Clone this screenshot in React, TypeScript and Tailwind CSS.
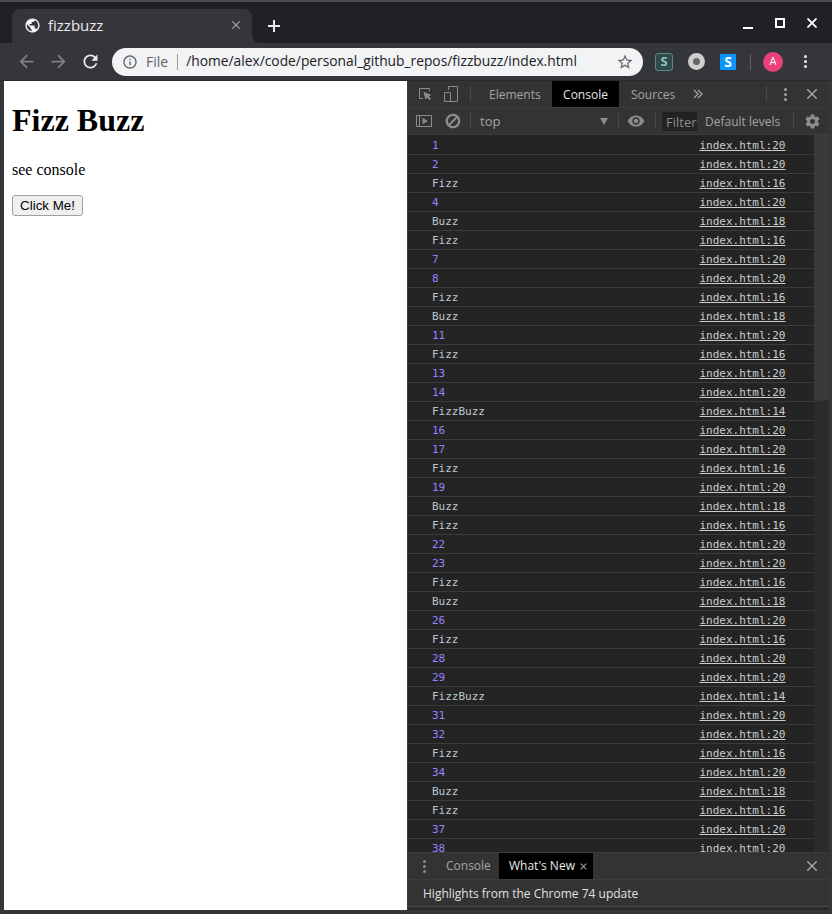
import type { ReactNode } from "react";

const paths = {
  globe:
    "M12 2C6.48 2 2 6.48 2 12s4.48 10 10 10 10-4.48 10-10S17.52 2 12 2zm-1 17.93c-3.95-.49-7-3.85-7-7.93 0-.62.08-1.21.21-1.79L9 15v1c0 1.1.9 2 2 2v1.93zm6.9-2.54c-.26-.81-1-1.39-1.9-1.39h-1v-3c0-.55-.45-1-1-1H8v-2h2c.55 0 1-.45 1-1V7h2c1.1 0 2-.9 2-2v-.41c2.93 1.19 5 4.06 5 7.41 0 2.08-.8 3.97-2.1 5.39z",
  close:
    "M19 6.41L17.59 5 12 10.59 6.41 5 5 6.41 10.59 12 5 17.59 6.41 19 12 13.41 17.59 19 19 17.59 13.41 12z",
  back: "M20 11H7.83l5.59-5.59L12 4l-8 8 8 8 1.41-1.41L7.83 13H20v-2z",
  forward: "M12 4l-1.41 1.41L16.17 11H4v2h12.17l-5.58 5.59L12 20l8-8z",
  reload:
    "M17.65 6.35C16.2 4.9 14.21 4 12 4c-4.42 0-7.99 3.58-7.99 8s3.57 8 7.99 8c3.73 0 6.84-2.55 7.73-6h-2.08c-.82 2.33-3.04 4-5.65 4-3.31 0-6-2.69-6-6s2.69-6 6-6c1.66 0 3.14.69 4.22 1.78L13 11h7V4l-2.35 2.35z",
  info: "M11 7h2v2h-2zm0 4h2v6h-2zm1-9C6.48 2 2 6.48 2 12s4.48 10 10 10 10-4.48 10-10S17.52 2 12 2zm0 18c-4.41 0-8-3.59-8-8s3.59-8 8-8 8 3.59 8 8-3.59 8-8 8z",
  star: "M22 9.24l-7.19-.62L12 2 9.19 8.63 2 9.24l5.46 4.73L5.82 21 12 17.27 18.18 21l-1.63-7.03L22 9.24zM12 15.4l-3.76 2.27 1-4.28-3.32-2.88 4.38-.38L12 6.1l1.71 4.04 4.38.38-3.32 2.88 1 4.28L12 15.4z",
  block:
    "M12 1C5.93 1 1 5.93 1 12s4.93 11 11 11 11-4.93 11-11S18.07 1 12 1zM4.5 12c0-4.14 3.36-7.5 7.5-7.5 1.55 0 3 .47 4.2 1.28L5.78 16.2C4.97 15 4.5 13.55 4.5 12zm7.5 7.5c-1.55 0-3-.47-4.2-1.28L18.22 7.8c.81 1.2 1.28 2.65 1.28 4.2 0 4.14-3.36 7.5-7.5 7.5z",
  eye: "M12 4.5C7 4.5 2.73 7.61 1 12c1.73 4.39 6 7.5 11 7.5s9.27-3.11 11-7.5c-1.73-4.39-6-7.5-11-7.5zM12 17c-2.76 0-5-2.24-5-5s2.24-5 5-5 5 2.24 5 5-2.24 5-5 5zm0-8c-1.66 0-3 1.34-3 3s1.34 3 3 3 3-1.34 3-3-1.34-3-3-3z",
  gear: "M19.43 12.98c.04-.32.07-.64.07-.98s-.03-.66-.07-.98l2.11-1.65c.19-.15.24-.42.12-.64l-2-3.46c-.12-.22-.39-.3-.61-.22l-2.49 1c-.52-.4-1.08-.73-1.69-.98l-.38-2.65C14.46 2.18 14.25 2 14 2h-4c-.25 0-.46.18-.49.42l-.38 2.65c-.61.25-1.17.59-1.69.98l-2.49-1c-.23-.09-.49 0-.61.22l-2 3.46c-.13.22-.07.49.12.64l2.11 1.65c-.04.32-.07.65-.07.98s.03.66.07.98l-2.11 1.65c-.19.15-.24.42-.12.64l2 3.46c.12.22.39.3.61.22l2.49-1c.52.4 1.08.73 1.69.98l.38 2.65c.03.24.24.42.49.42h4c.25 0 .46-.18.49-.42l.38-2.65c.61-.25 1.17-.59 1.69-.98l2.49 1c.23.09.49 0 .61-.22l2-3.46c.12-.22.07-.49-.12-.64l-2.11-1.65zM12 15.5c-1.93 0-3.5-1.57-3.5-3.5s1.57-3.5 3.5-3.5 3.5 1.57 3.5 3.5-1.57 3.5-3.5 3.5z",
};

const Icon = ({ d, size, className }: { d: string; size: number; className: string }) => (
  <svg width={size} height={size} viewBox="0 0 24 24" fill="currentColor" className={`shrink-0 ${className}`}>
    <path d={d} />
  </svg>
);

const Dots = ({ className }: { className: string }) => (
  <div className={`flex flex-col gap-[2px] shrink-0 ${className}`}>
    <span className="w-[3px] h-[3px] rounded-full bg-current" />
    <span className="w-[3px] h-[3px] rounded-full bg-current" />
    <span className="w-[3px] h-[3px] rounded-full bg-current" />
  </div>
);

const Divider = ({ className = "" }: { className?: string }) => (
  <span className={`w-px h-[16px] bg-[#4a4a4a] shrink-0 ${className}`} />
);

const rows = Array.from({ length: 38 }, (_, i) => {
  const n = i + 1;
  if (n % 15 === 0) return { text: "FizzBuzz", line: 14, isNum: false };
  if (n % 3 === 0) return { text: "Fizz", line: 16, isNum: false };
  if (n % 5 === 0) return { text: "Buzz", line: 18, isNum: false };
  return { text: String(n), line: 20, isNum: true };
});

const Slot = ({ w, children }: { w: string; children: ReactNode }) => (
  <div className={`${w} shrink-0 flex items-center justify-center`}>{children}</div>
);

const TitleBar = () => (
  <div className="h-[41px] shrink-0 flex items-end pl-[12px] pr-[11px] pt-[7px] text-[#e8eaed]">
    <div className="w-[240px] h-[34px] bg-[#35363a] rounded-t-[8px] flex items-center pb-[2px]">
      <Icon d={paths.globe} size={17} className="ml-[12px] text-[#f1f3f4]" />
      <span className="ml-[7px] text-[15px]">fizzbuzz</span>
      <Icon d={paths.close} size={14} className="ml-auto mr-[9px] text-[#a3a6aa]" />
    </div>
    <div className="w-[8px] h-[8px] bg-[#35363a]">
      <div className="w-full h-full bg-[#202124] rounded-bl-[8px]" />
    </div>
    <div className="self-center ml-[3px] mt-[-1px] w-[22px] flex justify-center">
      <svg width="14" height="14" viewBox="0 0 14 14" fill="currentColor" className="text-[#e8eaed]">
        <path d="M6 1h2v5h5v2H8v5H6V8H1V6h5z" />
      </svg>
    </div>
    <div className="ml-auto self-stretch flex items-center gap-[22px] pb-[7px]">
      <span className="w-[10px] h-[2px] bg-white mt-[11px]" />
      <span className="w-[10px] h-[10px] border-2 border-white" />
      <svg width="10" height="10" viewBox="0 0 10 10" stroke="white" strokeWidth="1.8" className="mr-[4px]">
        <path d="M.5.5l9 9M9.5.5l-9 9" />
      </svg>
    </div>
  </div>
);

const Toolbar = () => (
  <div className="h-[38px] shrink-0 bg-[#35363a] flex items-center pl-[10px] border-b border-[#2a2b2e]">
    <Slot w="w-[32px]">
      <Icon d={paths.back} size={21} className="text-[#7f8184]" />
    </Slot>
    <Slot w="w-[32px]">
      <Icon d={paths.forward} size={21} className="text-[#7f8184]" />
    </Slot>
    <Slot w="w-[32px]">
      <Icon d={paths.reload} size={21} className="text-[#e8eaed]" />
    </Slot>
    <div className="ml-[6px] w-[531px] h-[28px] rounded-full bg-[#f1f3f4] flex items-center">
      <Icon d={paths.info} size={16} className="ml-[10px] text-[#5f6368]" />
      <span className="ml-[8px] text-[14px] text-[#5f6368]">File</span>
      <span className="ml-[9px] w-px h-[16px] bg-[#9aa0a6]" />
      <span className="ml-[8px] text-[13.8px] text-[#202124]">
        /home/alex/code/personal_github_repos/fizzbuzz/index.html
      </span>
      <Icon d={paths.star} size={18} className="ml-auto mr-[9px] text-[#5f6368]" />
    </div>
    <div className="ml-[12px] w-[18px] h-[18px] rounded-[3px] border border-[#5c8a85] bg-[#2f4a4a] flex items-center justify-center text-[13px] font-bold leading-none text-[#8fc4bb]">
      S
    </div>
    <div className="ml-[15px] w-[17px] h-[17px] rounded-full border-[5px] border-[#cfcfcf] bg-[#666666]" />
    <div className="ml-[15px] w-[16px] h-[16px] bg-[#0a95ff] flex items-center justify-center text-[14px] font-bold leading-none text-white">
      S
    </div>
    <span className="ml-[14px] w-px h-[16px] bg-[#5f6368]" />
    <div className="ml-[12px] w-[20px] h-[20px] rounded-full bg-[#ec407a] flex items-center justify-center text-[11px] text-white">
      A
    </div>
    <Dots className="ml-[21px] text-[#e8eaed]" />
  </div>
);

const DevToolsTabs = () => (
  <div className="h-[27px] shrink-0 bg-[#333333] border-b border-[#3d3d3d] flex items-center text-[12px] text-[#a3a3a3]">
    <svg width="16" height="16" viewBox="0 0 16 16" fill="none" stroke="#8c8c8c" className="ml-[9px] shrink-0">
      <path d="M12.5 5V2.5h-10v10H6" />
      <path d="M7 6.5l6.5 2.5-2.5 1 2.5 3-1 .8-2.4-3-1.3 2z" fill="#8c8c8c" />
    </svg>
    <svg width="16" height="18" viewBox="0 0 16 18" fill="none" stroke="#8c8c8c" className="ml-[10px] shrink-0">
      <path d="M5.5 5V1.5h9v15h-9" />
      <path d="M1.5 7.5h6v9h-6z" />
    </svg>
    <Divider className="ml-[11px]" />
    <span className="ml-[18px] w-[63px] pt-[2px]">Elements</span>
    <div className="w-[67px] h-full bg-black text-[#e8e8e8] flex items-center justify-center pt-[2px]">Console</div>
    <span className="ml-[12px] w-[62px] pt-[2px]">Sources</span>
    <svg width="10" height="10" viewBox="0 0 10 10" fill="none" stroke="#a3a3a3" strokeWidth="1.3" className="shrink-0">
      <path d="M1 1l4 4-4 4M5 1l4 4-4 4" />
    </svg>
    <Divider className="ml-[63px]" />
    <Dots className="ml-[17px] text-[#a3a3a3]" />
    <Icon d={paths.close} size={18} className="ml-[16px] text-[#a3a3a3]" />
  </div>
);

const ConsoleToolbar = () => (
  <div className="h-[27px] shrink-0 bg-[#333333] border-b border-[#3d3d3d] flex items-center text-[12px] text-[#a3a3a3]">
    <svg width="16" height="14" viewBox="0 0 16 14" fill="none" stroke="#8c8c8c" className="ml-[8px] shrink-0">
      <path d="M.5 1.5h15v11H.5zM3.5 1.5v11" />
      <path d="M7 4.5l4 2.5-4 2.5z" fill="#8c8c8c" />
    </svg>
    <Icon d={paths.block} size={16} className="ml-[13px] text-[#8c8c8c]" />
    <Divider className="ml-[9px]" />
    <span className="ml-[9px] w-[120px] text-[13px] pt-[2px]">top</span>
    <span className="w-0 h-0 border-x-[4px] border-x-transparent border-t-[7px] border-t-[#8c8c8c]" />
    <Divider className="ml-[10px]" />
    <Icon d={paths.eye} size={18} className="ml-[8px] text-[#8c8c8c]" />
    <Divider className="ml-[10px]" />
    <div className="ml-[6px] w-[35px] h-[19px] bg-[#222222] pl-[4px] text-[13px] leading-[20px] overflow-hidden whitespace-nowrap text-[#8c8c8c]">
      Filter
    </div>
    <span className="ml-[8px] w-[88px] whitespace-nowrap pt-[2px]">Default levels</span>
    <Divider />
    <Icon d={paths.gear} size={17} className="ml-[10px] text-[#8c8c8c]" />
  </div>
);

const ConsoleRows = () => (
  <div className="flex-1 min-h-0 flex overflow-hidden bg-[#242424]">
    <div className="flex-1 pt-px font-['DejaVu_Sans_Mono',monospace] text-[11px]">
      {rows.map((r, i) => (
        <div key={i} className="h-[19px] box-border border-b border-[#3a3a3a] flex items-center pl-[24px] pr-[28.5px] pt-[2px]">
          <span className={r.isNum ? "text-[#9980ff]" : "text-[#bdc6cf]"}>{r.text}</span>
          <span className="ml-auto text-[#cccccc] underline">index.html:{r.line}</span>
        </div>
      ))}
    </div>
    <div className="w-[15px] shrink-0 bg-[#2b2b2b]">
      <div className="h-[266px] bg-[#3a3a3a] border-b border-[#333]" />
    </div>
  </div>
);

const Drawer = () => (
  <div className="shrink-0 bg-[#333333] text-[12px] text-[#a3a3a3]">
    <div className="h-[28px] border-y border-[#3d3d3d] flex items-center">
      <Dots className="ml-[15px] text-[#8c8c8c]" />
      <span className="ml-[20px] w-[53px]">Console</span>
      <div className="w-[94px] h-full bg-black text-[#e8e8e8] flex items-center pl-[10px]">
        What's New
        <Icon d={paths.close} size={11} className="ml-auto mr-[4px] text-[#a3a3a3]" />
      </div>
      <Icon d={paths.close} size={18} className="ml-auto mr-[8px] text-[#a3a3a3]" />
    </div>
    <div className="h-[27px] border-b border-[#4a4a4a] flex items-center pl-[15px] pt-px text-[#e0e0e0]">
      Highlights from the Chrome 74 update
    </div>
    <div className="h-[3px] bg-[#2b2b2b]" />
  </div>
);

export default function App() {
  return (
    <div className="w-[832px] h-[914px] bg-[#202124] border-t-2 border-[#4a4b4d] flex flex-col overflow-hidden font-['Open_Sans',sans-serif]">
      <TitleBar />
      <Toolbar />
      <div className="flex-1 min-h-0 flex pl-[4px] pr-[3px] pb-[4px] bg-[#35363a]">
        <div className="w-[403px] shrink-0 bg-white pl-[8px] text-black font-['Liberation_Serif',serif]">
          <h1 className="mt-[21.44px] text-[32px] leading-[37px] font-bold">Fizz Buzz</h1>
          <p className="mt-[21.44px] text-[16px] leading-[18px]">see console</p>
          <button className="mt-[16px] w-[71px] h-[21px] rounded-[3px] border border-[#a0a0a0] bg-[#efefef] text-[13.33px] leading-none font-['Liberation_Sans',sans-serif]">
            Click Me!
          </button>
        </div>
        <div className="flex-1 min-w-0 flex flex-col border-l border-[#3d3d3d]">
          <DevToolsTabs />
          <ConsoleToolbar />
          <ConsoleRows />
          <Drawer />
        </div>
      </div>
    </div>
  );
}
